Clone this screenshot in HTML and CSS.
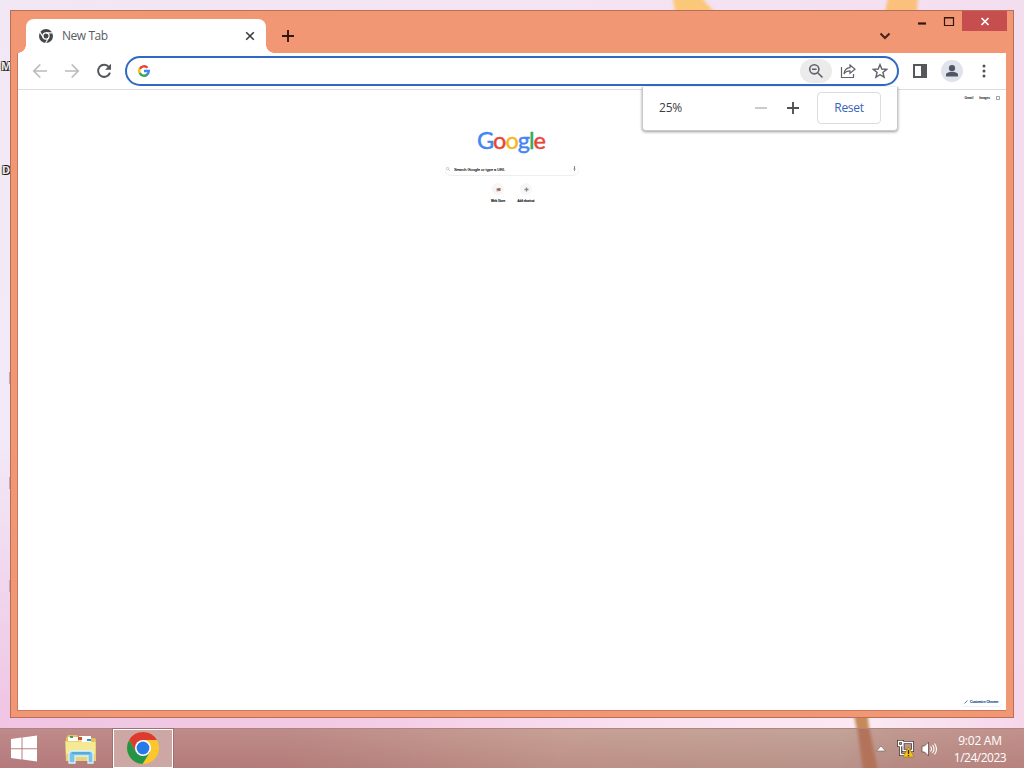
FILE: index.html
```html
<!DOCTYPE html>
<html lang="en">
<head>
<meta charset="utf-8">
<title>New Tab</title>
<link rel="stylesheet" href="styles.css">
</head>
<body>
<div class="desktop">
  <svg class="wallpaper" width="1024" height="768" viewBox="0 0 1024 768">
    <defs><filter id="soft" x="-50%" y="-10%" width="200%" height="120%"><feGaussianBlur stdDeviation="1.5"/></filter></defs>
    <path d="M672 -6H698L718 16H676Z" fill="#fac878" filter="url(#soft)"/>
    <path d="M889 -6H918L917 16H884Z" fill="#fbc07c" filter="url(#soft)"/>
    <path d="M853 710H867L870 736H858Z" fill="#c58a58" filter="url(#soft)"/>
  </svg>
  <span class="desk-label label-m">M</span>
  <span class="desk-label label-d">D</span>
  <i class="edge-mark mark-a"></i><i class="edge-mark mark-b"></i><i class="edge-mark mark-c"></i>

  <main class="window">
    <div class="caption">
      <svg width="27" height="20" viewBox="0 0 27 20"><path d="M9 12.500h8" stroke="#321711" stroke-width="2.200"/></svg>
      <svg width="26" height="20" viewBox="0 0 26 20"><path d="M8.500 6.500h9v8h-9zM8 7h10" fill="none" stroke="#321711" stroke-width="1.200"/></svg>
      <div class="win-close"><svg width="45" height="20" viewBox="0 0 45 20"><path d="M19.500 7l7 7M26.500 7l-7 7" stroke="#fff" stroke-width="1.700"/></svg></div>
    </div>
    <header class="tabstrip">
      <div class="tab">
        <svg class="tab-icon" width="14" height="14" viewBox="0 0 14 14"><circle cx="7" cy="7" r="7" fill="#444649"/><circle cx="7" cy="7" r="3.100" fill="none" stroke="#fff" stroke-width="1.200"/><path d="M7 3.900h6.500M4.300 8.600L1 3.100M9.700 8.600L6.600 14" stroke="#fff" stroke-width="1.100"/></svg>
        <span class="tab-title">New Tab</span>
        <svg width="10" height="10" viewBox="0 0 10 10"><path d="M1.200 1.200l7.600 7.600M8.800 1.200l-7.600 7.600" stroke="#3d3d40" stroke-width="1.600"/></svg>
      </div>
      <svg class="new-tab" width="14" height="14" viewBox="0 0 14 14"><path d="M7 1v12M1 7h12" stroke="#321711" stroke-width="1.900"/></svg>
      <svg class="tab-search" width="12" height="8" viewBox="0 0 12 8"><path d="M1.500 1.500L6 6l4.500-4.500" fill="none" stroke="#48211a" stroke-width="2"/></svg>
    </header>

    <section class="browser">
      <nav class="toolbar">
        <div class="nav-buttons">
          <svg width="16" height="16" viewBox="0 0 16 16"><path d="M15 8H2M8.300 1.500L1.800 8l6.500 6.500" fill="none" stroke="#b9bbbd" stroke-width="1.700"/></svg>
          <svg width="16" height="16" viewBox="0 0 16 16"><path d="M1 8h13M7.700 1.500L14.200 8l-6.500 6.500" fill="none" stroke="#b9bbbd" stroke-width="1.700"/></svg>
          <svg width="16" height="16" viewBox="0 0 16 16"><path d="M13 4a6.100 6.100 0 1 0 1 5.600" fill="none" stroke="#55585b" stroke-width="2"/><path d="M15 .8v6H9z" fill="#55585b"/></svg>
        </div>
        <div class="omnibox">
          <svg class="google-g" width="12" height="12" viewBox="0 0 24 24"><g fill="none" stroke-width="4.800"><path d="M19 5.500A9.600 9.600 0 0 0 3.500 8" stroke="#ea4335"/><path d="M3.500 7.600a9.600 9.600 0 0 0 0 8.800" stroke="#fbbc05"/><path d="M3.500 16A9.600 9.600 0 0 0 18.500 19" stroke="#34a853"/><path d="M18 19.300A9.500 9.500 0 0 0 21.600 12H12" stroke="#4285f4"/></g></svg>
          <div class="omnibox-actions">
            <div class="zoom-chip"><svg width="16" height="16" viewBox="0 0 16 16"><g fill="none" stroke="#5f6368" stroke-width="1.600"><circle cx="6.300" cy="6.300" r="4.600"/><path d="M9.700 9.700l4.800 4.800M4 6.300h4.600"/></g></svg></div>
            <svg width="16" height="16" viewBox="0 0 16 16"><path d="M1.500 4v10.500h12V11M10 2l5 4.200-5 4V7.800C7.200 7.800 5.200 8.700 4 11c.3-3.500 2.500-6 6-6.300z" fill="none" stroke="#5f6368" stroke-width="1.200"/></svg>
            <svg width="16" height="16" viewBox="0 0 16 16"><path d="M8 1.600l1.800 4.400 4.800.4-3.700 3.100 1.200 4.700L8 11.700l-4.100 2.500 1.200-4.700-3.700-3.100 4.800-.4z" fill="none" stroke="#5f6368" stroke-width="1.400"/></svg>
          </div>
        </div>
        <div class="tool-actions">
          <svg width="16" height="16" viewBox="0 0 16 16"><path d="M1 1h14v14H1zM3 3v10h6V3z" fill="#55585b" fill-rule="evenodd"/></svg>
          <div class="avatar"><svg width="14" height="14" viewBox="0 0 14 14" fill="#505665"><circle cx="7" cy="4.200" r="3.100"/><path d="M1 12.500v-1.800C1 8.500 4.500 8 7 8s6 .5 6 2.700v1.800z"/></svg></div>
          <svg width="16" height="16" viewBox="0 0 16 16" fill="#505356"><circle cx="8" cy="3" r="1.500"/><circle cx="8" cy="8" r="1.500"/><circle cx="8" cy="13" r="1.500"/></svg>
        </div>
      </nav>
      <div class="page">
        <div class="page-links"><span>Gmail</span><span>Images</span>
          <svg width="4" height="4" viewBox="0 0 4 4"><path d="M.5.500h3v3h-3z" fill="none" stroke="#888" stroke-width=".8"/></svg>
        </div>
        <div class="start">
          <div class="logo"><span class="blue">G</span><span class="red">o</span><span class="yellow">o</span><span class="blue">g</span><span class="green">l</span><span class="red">e</span></div>
          <div class="search">
            <svg width="4" height="4" viewBox="0 0 4 4"><circle cx="1.600" cy="1.600" r="1.200" fill="none" stroke="#999" stroke-width=".5"/><path d="M2.500 2.500L4 4" stroke="#999" stroke-width=".6"/></svg>
            <span>Search Google or type a URL</span>
            <svg width="3" height="6" viewBox="0 0 3 6"><path d="M1.500 0v3M.5 3q1 1 2 0M1.500 4v1" fill="none" stroke="#666" stroke-width=".8"/></svg>
          </div>
          <div class="shortcuts">
            <div class="shortcut"><div class="bubble warm"><svg width="5" height="5" viewBox="0 0 5 5"><path d="M.5 1.500L4.500 1v3H1z" fill="#77736c"/><path d="M.5 3h2v1.500h-2z" fill="#e0a18a"/></svg></div><span>Web Store</span></div>
            <div class="shortcut"><div class="bubble"><svg width="5" height="5" viewBox="0 0 5 5"><path d="M2.500.500v4M.5 2.500h4" stroke="#88898b" stroke-width="1.300"/></svg></div><span>Add shortcut</span></div>
          </div>
        </div>
        <div class="customize"><svg width="4" height="4" viewBox="0 0 4 4"><path d="M.5 3.500l3-3" stroke="#5379a9" stroke-width="1"/></svg><span>Customize Chrome</span></div>
      </div>
    </section>

    <aside class="zoom-popup">
      <span class="percent">25%</span>
      <svg width="14" height="14" viewBox="0 0 14 14"><path d="M1 7h12" stroke="#bdbec0" stroke-width="1.600"/></svg>
      <svg class="plus" width="14" height="14" viewBox="0 0 14 14"><path d="M7 1v12M1 7h12" stroke="#4f5154" stroke-width="1.900"/></svg>
      <button class="reset">Reset</button>
    </aside>
  </main>

  <footer class="taskbar">
    <svg class="post" width="40" height="39" viewBox="0 0 40 39"><path d="M12 -3H24L33 42H18Z" fill="#b3735a" filter="url(#soft)"/></svg>
    <svg class="start-button" width="28" height="28" viewBox="0 0 28 28" fill="#fff"><path d="M1 4l10.500-1.500v10.700H1zM12.500 2.400L27 .4v12.800H12.500zM1 14.200h10.500v10.200L1 23zM12.500 14.200H27V26.500l-14.500-2z"/></svg>
    <svg class="explorer" width="34" height="32" viewBox="0 0 34 32">
      <path d="M2 5l2-3h9l2 3h15q2 0 2 2v19H2z" fill="#e0c45e"/>
      <path d="M4 4h10v4H4zM15 3h12v6H15z" fill="#fff"/><path d="M6 3h3v2H6z" fill="#48a158"/><path d="M14 4h4v3h-4z" fill="#d44b3c"/><path d="M23 6h4v2h-4z" fill="#388bd0"/>
      <path d="M1 8h14l2-1 1 2h14v19H2z" fill="#ead375"/><path d="M2 9h29v12H2z" fill="#f6e996"/>
      <path d="M5 30V20l2-2h20l2 2v10h-5v-7H11v7z" fill="#79c3e9" stroke="#d8f3fb" stroke-width="1.300"/><path d="M8 20h18" stroke="#4ea1d0" stroke-width="1.500"/>
    </svg>
    <div class="task-active">
      <svg width="34" height="34" viewBox="0 0 34 34"><circle cx="17" cy="17" r="16" fill="#fbc72c"/><path d="M3.100 9A16 16 0 0 1 30.900 9H17L10 21z" fill="#dd3b30"/><path d="M3.100 9A16 16 0 0 0 16.500 33L24 21H10z" fill="#249448"/><circle cx="17" cy="17" r="8" fill="#fff"/><circle cx="17" cy="17" r="6.400" fill="#2879e8"/></svg>
    </div>
    <div class="tray">
      <svg width="10" height="7" viewBox="0 0 10 7"><path d="M.5 6L5 1l4.500 5z" fill="#fff" stroke="#755b55" stroke-width=".6"/></svg>
      <svg class="network" width="18" height="18" viewBox="0 0 18 18"><path d="M6 2.500h9.500v8H6zM3.500 6v8.500H9M1.500 1.500h4v4h-4z" fill="none" stroke="#493a36" stroke-width="3"/><path d="M6 2.500h9.500v8H6zM3.500 6v8.500H9M1.500 1.500h4v4h-4z" fill="none" stroke="#fff" stroke-width="1.300"/><path d="M11.500 7L17 17H6z" fill="#f5c51b" stroke="#a37500" stroke-width=".6"/><path d="M11.500 10v4M11.500 15v1.200" stroke="#332b10" stroke-width="1.400"/></svg>
      <svg width="17" height="16" viewBox="0 0 17 16"><path d="M1 5h2.500l4-4v14l-4-4H1z" fill="#fff" stroke="#624d48" stroke-width=".8"/><path d="M9.500 5.500q2 2.500 0 5M11.500 4q3 4 0 8M13.500 2.500q4 5.500 0 11" fill="none" stroke="#fff" stroke-width="1.100"/></svg>
      <div class="clock"><span class="time">9:02 AM</span><span class="date">1/24/2023</span></div>
    </div>
  </footer>
</div>
</body>
</html>
```
FILE: styles.css
```css
* { box-sizing: border-box; }
body { margin: 0; overflow: hidden; font: 12px "Open Sans", sans-serif; }
svg { display: block; flex: none; }
.desktop { position: relative; width: 1024px; height: 768px; display: flex; flex-direction: column; padding: 10px 10px 0; background: linear-gradient(90deg, #efc5e3, #f3cbe5 35%, #fbe3f1 65%, #fbe9f3 85%, #f6d7ea) 0 100% / 100% 52px no-repeat, linear-gradient(#f2e7f5, #f2eaf8 60%, #efc5e3) 0 0 / 10px 716px no-repeat, linear-gradient(#f3def0, #f5d9ed 60%, #f6d7ea) 100% 0 / 10px 716px no-repeat, linear-gradient(90deg, #f2e7f5, #f5e4f3 50%, #f3def0); }
.wallpaper { position: absolute; inset: 0; }
.desk-label { position: absolute; left: 1px; font-size: 11px; font-weight: bold; line-height: 12px; color: #eee; text-shadow: 1px 1px #181818, -1px 1px #555, 1px -1px #181818, -1px -1px #777; }
.label-m { top: 60px; }
.label-d { top: 164px; left: 2px; }
.edge-mark { position: absolute; left: 9px; width: 2px; height: 12px; background: #c5a9b8; }
.mark-a { top: 372px; }
.mark-b { top: 477px; }
.mark-c { top: 580px; }
.window { position: relative; width: 1004px; height: 708px; padding: 0 7px 7px; display: flex; flex-direction: column; background: #f19773; border: 1px solid #b76f59; }
.caption { position: absolute; top: 0; right: 6px; display: flex; }
.win-close { width: 45px; height: 20px; background: #c64e4e; }
.tabstrip { height: 42px; flex: none; padding: 8px 0 0 8px; display: flex; }
.tab { position: relative; width: 240px; height: 34px; background: #fff; border-radius: 8px 8px 0 0; display: flex; align-items: center; padding: 0 11px 0 13px; }
.tab::before, .tab::after { content: ""; position: absolute; bottom: 0; width: 8px; height: 8px; }
.tab::before { left: -8px; background: radial-gradient(circle at 0 0, transparent 7.5px, #fff 8px); }
.tab::after { right: -8px; background: radial-gradient(circle at 100% 0, transparent 7.5px, #fff 8px); }
.tab-title { margin: 0 auto 1px 9px; color: #5b5c60; letter-spacing: -.45px; }
.new-tab { margin: 10px 0 0 15px; }
.tab-search { margin: 13px 115px 0 auto; }
.browser { width: 988px; height: 658px; display: flex; flex-direction: column; background: #fff; outline: 1px solid #c8795e; outline-offset: 0; clip-path: inset(0 0 -1px -1px); }
.toolbar { height: 37px; flex: none; display: flex; align-items: center; border-bottom: 1px solid #dcdcdf; padding-left: 14px; }
.nav-buttons { width: 93px; display: flex; gap: 16px; }
.omnibox { width: 774px; height: 30px; border: 2px solid #3068c3; border-radius: 15px; display: flex; align-items: center; justify-content: space-between; padding: 0 9px 0 11px; }
.omnibox-actions { display: flex; align-items: center; gap: 16px; }
.zoom-chip { width: 32px; height: 24px; margin-right: -8px; border-radius: 12px; background: #ebebeb; display: grid; place-items: center; }
.tool-actions { display: flex; align-items: center; gap: 10px; padding-left: 13px; }
.avatar { width: 22px; height: 22px; border-radius: 50%; background: #e0e2ec; display: grid; place-items: center; margin-left: 3px; margin-right: 3px; }
.page { flex: 1; display: flex; flex-direction: column; font-family: "Liberation Sans", sans-serif; color: #202124; }
.page-links { align-self: flex-end; display: flex; align-items: center; gap: 6px; margin: 5px 6px 0 0; height: 6px; font-size: 3.300px; line-height: 6px; font-weight: bold; letter-spacing: -.1px; }
.start { width: 134px; margin: 25px auto 0; display: flex; flex-direction: column; align-items: center; }
.logo { font: 23.500px/28px Lato, sans-serif; height: 37px; letter-spacing: -1px; margin-right: 2px; -webkit-text-stroke: .45px currentColor; }
.blue { color: #4285f4; } .red { color: #e84436; } .yellow { color: #f4b91b; } .green { color: #34a853; }
.search { width: 134px; height: 12px; border-radius: 6px; box-shadow: 0 .5px 1px #0002; display: flex; align-items: center; padding: 0 3px 0 1px; font-size: 4px; letter-spacing: -.05px; }
.search span { margin: 0 auto 0 4px; -webkit-text-stroke: .15px currentColor; }
.shortcuts { display: flex; margin-top: 8px; }
.shortcut { width: 28px; display: flex; flex-direction: column; align-items: center; font-size: 3px; line-height: 6px; gap: 3px; white-space: nowrap; -webkit-text-stroke: .2px currentColor; }
.bubble { width: 12px; height: 12px; border-radius: 50%; background: #f7f7f7; display: grid; place-items: center; }
.warm { background: #faf4f2; }
.customize { align-self: flex-end; margin: auto 4px 4px 0; width: 41px; height: 8px; border-radius: 4px; box-shadow: 0 .5px 1px #5975a333; display: flex; align-items: center; gap: 2px; padding-left: 3px; font-size: 3.300px; white-space: nowrap; color: #264f91; -webkit-text-stroke: .2px currentColor; }
.zoom-popup { position: absolute; left: 631px; top: 76px; width: 256px; height: 44px; background: #fff; border: 1px solid #cacacc; border-top: 0; border-radius: 0 0 4px 4px; box-shadow: 0 1px 3px #0006; display: flex; align-items: center; padding: 0 16px 2px; }
.percent { margin-right: auto; color: #3d3e40; letter-spacing: -.2px; }
.plus { margin: 0 17px 0 18px; }
.reset { width: 64px; height: 32px; border: 1px solid #dadce0; border-radius: 4px; background: #fff; color: #3665bc; font: 12px "Open Sans", sans-serif; letter-spacing: -.3px; padding: 0; }
.taskbar { position: relative; width: 1024px; height: 40px; margin: 10px 0 0 -10px; border-top: 1px solid #ad8585; display: flex; align-items: center; background: linear-gradient(#ffffff12, #80354018), linear-gradient(90deg, #ba8182, #b9837f 28%, #c3998d 55%, #be9c90 82%, #bb9188 88%, #bd8984); }
.post { position: absolute; left: 845px; top: 0; overflow: hidden; }
.start-button { margin-left: 10px; }
.explorer { margin-left: 26px; }
.task-active { width: 60px; height: 39px; margin-left: 15px; border: 1px solid #fff; outline: 1px solid #8a626288; display: grid; place-items: center; background: #cca7a3; }
.task-active svg { margin-top: -2px; }
.tray { margin-left: auto; display: flex; align-items: center; padding-right: 14px; }
.network { margin: 0 6px 0 11px; }
.clock { width: 60px; margin-left: 12px; display: flex; flex-direction: column; align-items: center; line-height: 17px; color: #fff; }
.time { letter-spacing: -.25px; }
.date { letter-spacing: -.5px; }
```
